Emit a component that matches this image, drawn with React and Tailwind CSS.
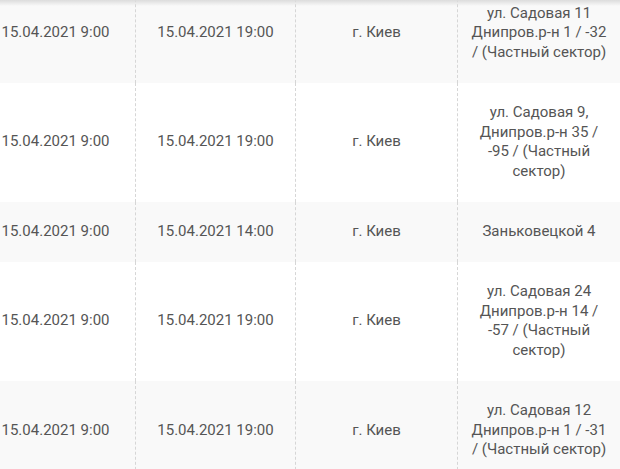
import React from 'react';

const rows = [
  { from: '15.04.2021 9:00', to: '15.04.2021 19:00', city: 'г. Киев', addr: 'ул. Садовая 11 Днипров.р-н 1 / -32 / (Частный сектор)' },
  { from: '15.04.2021 9:00', to: '15.04.2021 19:00', city: 'г. Киев', addr: 'ул. Садовая 9, Днипров.р-н 35 / -95 / (Частный сектор)' },
  { from: '15.04.2021 9:00', to: '15.04.2021 14:00', city: 'г. Киев', addr: 'Заньковецкой 4' },
  { from: '15.04.2021 9:00', to: '15.04.2021 19:00', city: 'г. Киев', addr: 'ул. Садовая 24 Днипров.р-н 14 / -57 / (Частный сектор)' },
  { from: '15.04.2021 9:00', to: '15.04.2021 19:00', city: 'г. Киев', addr: 'ул. Садовая 12 Днипров.р-н 1 / -31 / (Частный сектор)' },
];

const Cell = ({ children, last }) => (
  <div
    className={`flex items-center justify-center text-center px-3 py-[20.17px] ${
      last ? '' : 'border-r border-dashed border-[#d6d6d6]'
    }`}
  >
    {children}
  </div>
);

const App = () => {
  return (
    <div className="relative w-[620px] h-[469px] overflow-hidden bg-white">
      <div
        className="-ml-[24px] -mt-[16.5px] w-[644px] text-[15px] leading-[19.67px] text-[#555]"
        style={{ fontFamily: 'Roboto, "Noto Sans", sans-serif' }}
      >
        {rows.map((row, i) => (
          <div
            key={i}
            className={`grid grid-cols-[160px_160px_162px_162px] ${
              i % 2 === 0 ? 'bg-[#f9f9f9]' : 'bg-white'
            }`}
          >
            <Cell>{row.from}</Cell>
            <Cell>{row.to}</Cell>
            <Cell>{row.city}</Cell>
            <Cell last>{row.addr}</Cell>
          </div>
        ))}
      </div>
      <div className="absolute top-0 left-0 right-0 h-[6px] bg-gradient-to-b from-[#dcdcdc] to-transparent" />
    </div>
  );
};

export default App;
